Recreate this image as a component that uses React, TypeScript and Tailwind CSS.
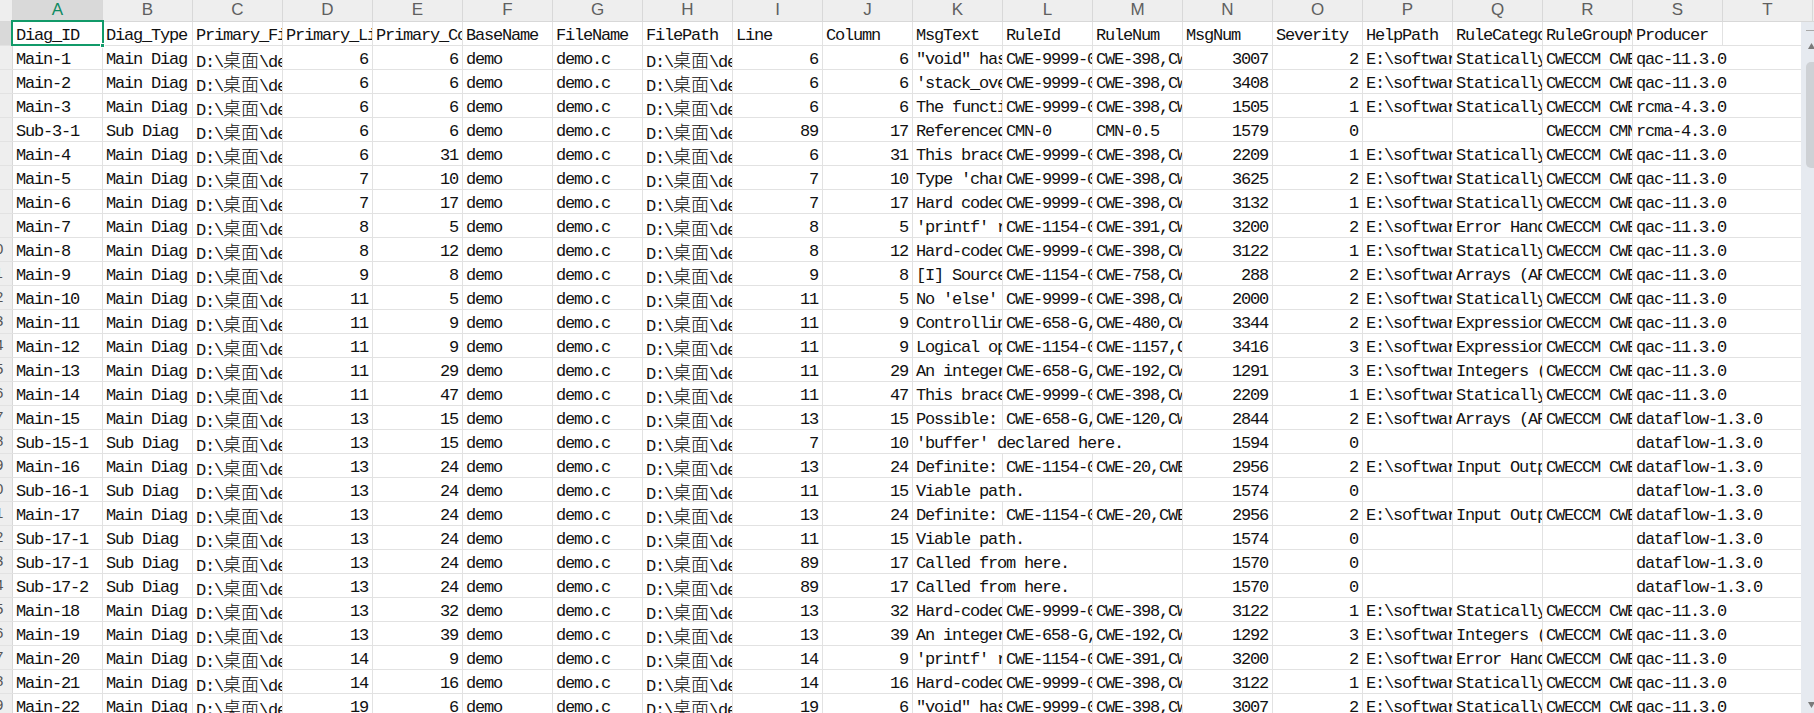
const COLS = 'ABCDEFGHIJKLMNOPQRST'.split('');
const HEADERS = ['Diag_ID', 'Diag_Type', 'Primary_File', 'Primary_Line', 'Primary_Column', 'BaseName', 'FileName', 'FilePath', 'Line', 'Column', 'MsgText', 'RuleId', 'RuleNum', 'MsgNum', 'Severity', 'HelpPath', 'RuleCategory', 'RuleGroupName', 'Producer', ''];

const PATH = 'D:\\桌面\\demo\\demo.c';
const HELP = 'E:\\software\\help';
const QAC = 'qac-11.3.0';
const RCMA = 'rcma-4.3.0';
const FLOW = 'dataflow-1.3.0';
const GROUP = 'CWECCM CWE-Weaknesses';

const C9999 = 'CWE-9999-0ther';
const C1154 = 'CWE-1154-0ther';
const C658 = 'CWE-658-G,CWE';
const R398 = 'CWE-398,CWE-1';
const STAT = 'Statically Detectable';

type Row = [string, number, number, number, number, string, string, string, number, number, string, string, string];

// id, primary line/col, line/col, text, rule id, rule num, msg, severity, help, category, producer
const ROWS: Row[] = [
    ['Main-1', 6, 6, 6, 6, '"void" has no parameters', C9999, R398, 3007, 2, HELP, STAT, QAC],
    ['Main-2', 6, 6, 6, 6, "'stack_overflow' is not", C9999, R398, 3408, 2, HELP, STAT, QAC],
    ['Main-3', 6, 6, 6, 6, 'The function is unused', C9999, R398, 1505, 1, HELP, STAT, RCMA],
    ['Sub-3-1', 6, 6, 89, 17, 'Referenced here in code', 'CMN-0', 'CMN-0.5', 1579, 0, '', '', RCMA],
    ['Main-4', 6, 31, 6, 31, 'This brace style is off', C9999, R398, 2209, 1, HELP, STAT, QAC],
    ['Main-5', 7, 10, 7, 10, "Type 'char' has been used", C9999, R398, 3625, 2, HELP, STAT, QAC],
    ['Main-6', 7, 17, 7, 17, 'Hard coded value found', C9999, R398, 3132, 1, HELP, STAT, QAC],
    ['Main-7', 8, 5, 8, 5, "'printf' result unused", C1154, 'CWE-391,CWE-1', 3200, 2, HELP, 'Error Handling', QAC],
    ['Main-8', 8, 12, 8, 12, 'Hard-coded value found', C9999, R398, 3122, 1, HELP, STAT, QAC],
    ['Main-9', 9, 8, 9, 8, '[I] Source operand', C1154, 'CWE-758,CWE-1', 288, 2, HELP, 'Arrays (ARR)', QAC],
    ['Main-10', 11, 5, 11, 5, "No 'else' branch found", C9999, R398, 2000, 2, HELP, STAT, QAC],
    ['Main-11', 11, 9, 11, 9, 'Controlling expression', C658, 'CWE-480,CWE-1', 3344, 2, HELP, 'Expressions', QAC],
    ['Main-12', 11, 9, 11, 9, 'Logical operator used', C1154, 'CWE-1157,CWE', 3416, 3, HELP, 'Expressions', QAC],
    ['Main-13', 11, 29, 11, 29, 'An integer constant', C658, 'CWE-192,CWE-1', 1291, 3, HELP, 'Integers (INT)', QAC],
    ['Main-14', 11, 47, 11, 47, 'This brace style is off', C9999, R398, 2209, 1, HELP, STAT, QAC],
    ['Main-15', 13, 15, 13, 15, 'Possible: buffer overrun', C658, 'CWE-120,CWE-1', 2844, 2, HELP, 'Arrays (ARR)', FLOW],
    ['Sub-15-1', 13, 15, 7, 10, "'buffer' declared here.", '', '', 1594, 0, '', '', FLOW],
    ['Main-16', 13, 24, 13, 24, 'Definite: buffer overrun', C1154, 'CWE-20,CWE-1', 2956, 2, HELP, 'Input Output', FLOW],
    ['Sub-16-1', 13, 24, 11, 15, 'Viable path.', '', '', 1574, 0, '', '', FLOW],
    ['Main-17', 13, 24, 13, 24, 'Definite: buffer overrun', C1154, 'CWE-20,CWE-1', 2956, 2, HELP, 'Input Output', FLOW],
    ['Sub-17-1', 13, 24, 11, 15, 'Viable path.', '', '', 1574, 0, '', '', FLOW],
    ['Sub-17-1', 13, 24, 89, 17, 'Called from here.', '', '', 1570, 0, '', '', FLOW],
    ['Sub-17-2', 13, 24, 89, 17, 'Called from here.', '', '', 1570, 0, '', '', FLOW],
    ['Main-18', 13, 32, 13, 32, 'Hard-coded value found', C9999, R398, 3122, 1, HELP, STAT, QAC],
    ['Main-19', 13, 39, 13, 39, 'An integer constant', C658, 'CWE-192,CWE-1', 1292, 3, HELP, 'Integers (INT)', QAC],
    ['Main-20', 14, 9, 14, 9, "'printf' result unused", C1154, 'CWE-391,CWE-1', 3200, 2, HELP, 'Error Handling', QAC],
    ['Main-21', 14, 16, 14, 16, 'Hard-coded value found', C9999, R398, 3122, 1, HELP, STAT, QAC],
    ['Main-22', 19, 6, 19, 6, '"void" has no parameters', C9999, R398, 3007, 2, HELP, STAT, QAC],
];

const SPAN_WIDTH: Record<number, string> = {
    1: 'w-[90px]',
    2: 'w-[180px]',
    3: 'w-[270px]',
};

function toCells(r: Row): (string | number)[] {
    let group = GROUP;
    if (r[0] === 'Sub-3-1') group = 'CWECCM CMN-Common';
    else if (r[6] === '') group = '';
    return [
        r[0],
        r[0].startsWith('Main') ? 'Main Diag' : 'Sub Diag',
        PATH,
        r[1],
        r[2],
        'demo',
        'demo.c',
        PATH,
        r[3],
        r[4],
        r[5],
        r[6],
        r[7],
        r[8],
        r[9],
        r[10],
        r[11],
        group,
        r[12],
        '',
    ];
}

// 桌面 is set larger so it keeps the full-width look of the latin cell font
function CellText({ value }: { value: string }) {
    if (!value.includes('桌面')) return <>{value}</>;
    const [before, after] = value.split('桌面');
    return (
        <>
            {before}
            <span className="font-['Noto_Sans_CJK_SC',sans-serif] text-[18px] leading-none font-light tracking-normal">桌面</span>
            {after}
        </>
    );
}

function SheetRow({ cells, rowNum }: { cells: (string | number)[]; rowNum: number }) {
    const out = [];
    for (let i = 0; i < cells.length; i++) {
        const v = cells[i];
        let span = 1;
        // long text runs on over empty neighbours, as in a spreadsheet
        if (typeof v === 'string') {
            while (v.length * 9 + 3 > span * 90 - 1 && i + span < cells.length && cells[i + span] === '') span++;
        }
        out.push(
            <div
                key={i}
                className={`flex h-full shrink-0 items-start overflow-hidden border-r border-[#e2e2e2] pt-[4px] leading-[20px] whitespace-pre ${SPAN_WIDTH[span]} ${
                    typeof v === 'number' ? 'justify-end pr-[4px]' : 'pl-[3px]'
                }`}
            >
                <span>{typeof v === 'number' ? v : <CellText value={v} />}</span>
            </div>,
        );
        i += span - 1;
    }
    return (
        <div className="flex h-[24px] shrink-0 border-b border-[#e2e2e2] bg-white">
            <div
                className={`flex h-full w-[13px] shrink-0 items-center overflow-hidden border-r border-[#d8d8d8] font-['Liberation_Sans',sans-serif] text-[15px] tracking-normal text-[#555] ${
                    rowNum === 1 ? 'bg-[#d9d9d9]' : 'bg-[#eeeeee]'
                }`}
            >
                <span className="-ml-[15px] w-[20px] shrink-0 text-center">{rowNum}</span>
            </div>
            {out}
        </div>
    );
}

function Scrollbar() {
    return (
        <div className="flex h-full w-[13px] shrink-0 flex-col bg-[#e6eaf0] pl-[5px]">
            <div className="mt-[8px] h-[1px] w-full bg-[#a8a8a8]" />
            <svg className="mt-[12px] ml-[2px] shrink-0" width="7" height="6" viewBox="0 0 7 6">
                <path d="M3.5 0 L7 6 L0 6 Z" fill="#7a7a7a" />
            </svg>
            <div className="mt-[13px] h-[106px] w-full shrink-0 rounded-l-[5px] bg-[#ced1d5]" />
            <svg className="mt-[534px] ml-[2px] shrink-0" width="7" height="6" viewBox="0 0 7 6">
                <path d="M0 0 L7 0 L3.5 6 Z" fill="#7a7a7a" />
            </svg>
        </div>
    );
}

export default function App() {
    return (
        <div className="relative flex h-[713px] w-[1814px] flex-col overflow-hidden bg-white font-['Liberation_Mono',monospace] text-[17px] tracking-[-1.2px] text-[#111]">
            {/* 列ヘッダー */}
            <div className="flex h-[22px] shrink-0 border-b border-[#d8d8d8] bg-[#eeeeee] font-['Liberation_Sans',sans-serif] text-[17px] tracking-normal text-[#5f5f5f]">
                <div className="h-full w-[13px] shrink-0 border-r border-[#d8d8d8]" />
                {COLS.map((c, i) => (
                    <div
                        key={c}
                        className={`flex h-full w-[90px] shrink-0 items-center justify-center border-r border-[#d8d8d8] pb-[2px] ${
                            i === 0 ? 'bg-[#d9d9d9] text-[#0f8a62]' : ''
                        }`}
                    >
                        {c}
                    </div>
                ))}
            </div>

            <div className="flex min-h-0 flex-1">
                <div className="w-[1801px] shrink-0 overflow-hidden">
                    <SheetRow cells={HEADERS} rowNum={1} />
                    {ROWS.map((r, i) => (
                        <SheetRow key={i} cells={toCells(r)} rowNum={i + 2} />
                    ))}
                </div>
                <Scrollbar />
            </div>

            {/* 選択セル */}
            <div className="absolute top-[20px] left-[11px] h-[26px] w-[93px] border-[2.5px] border-[#119a69]" />
            <div className="absolute top-[43px] left-[100px] h-[5px] w-[5px] border border-white bg-[#119a69]" />
        </div>
    );
}
